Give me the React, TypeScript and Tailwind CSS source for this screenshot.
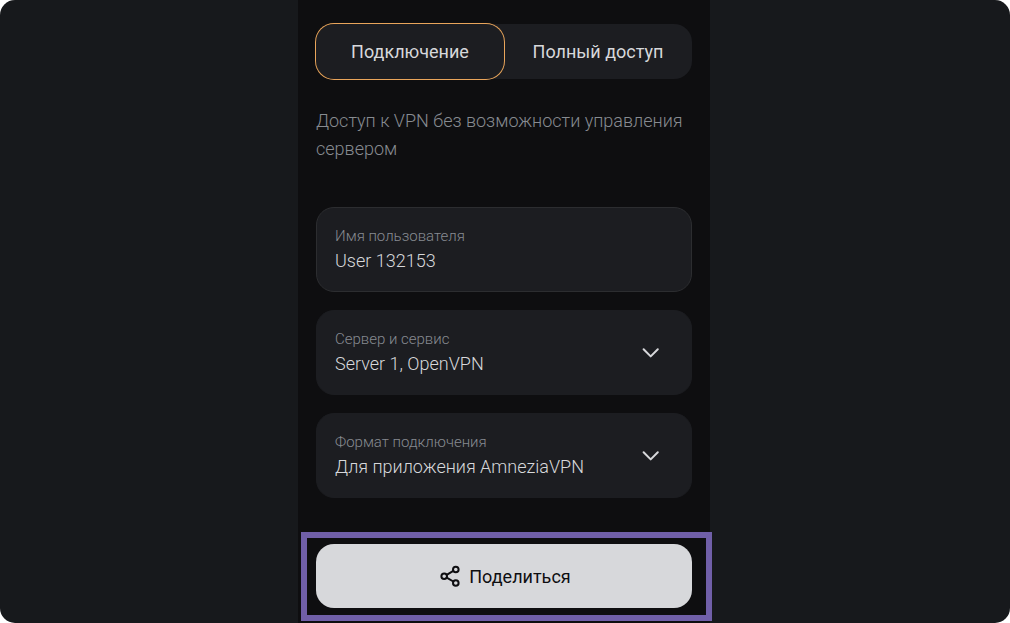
import React, { useState } from "react";

type FieldProps = { id: string; label: string; outlined?: boolean; children: React.ReactNode; chevron?: boolean };

const controlClass =
  "block h-[26px] w-full appearance-none bg-transparent p-0 text-[18px] leading-[26px] font-light text-[#d7d8db] outline-none";

function Chevron() {
  return (
    <svg className="pointer-events-none mr-2.5 h-6 w-6 shrink-0" viewBox="0 0 24 24" fill="none" stroke="#d7d8db" strokeWidth="2" strokeLinecap="round" strokeLinejoin="round" aria-hidden="true">
      <path d="M4.6 9.3l7.1 7.1 7.1-7.1" />
    </svg>
  );
}

function Field({ id, label, outlined, chevron, children }: FieldProps) {
  return (
    <div
      className={`flex items-center rounded-[18px] border bg-[#1c1d21] px-[18px] pt-4 pb-[17px] ${
        outlined ? "border-[#2c2d30]" : "border-[#1c1d21]"
      }`}
    >
      <div className="min-w-0 flex-1">
        <label htmlFor={id} className="block text-[15px] leading-6 font-light text-[#878b91]">
          {label}
        </label>
        {children}
      </div>
      {chevron && <Chevron />}
    </div>
  );
}

export default function App() {
  const [tab, setTab] = useState(0);
  const [name, setName] = useState("User 132153");
  const tabs = ["Подключение", "Полный доступ"];

  return (
    <div className="bg-white font-['Roboto',sans-serif]">
      <div className="flex min-h-screen justify-center overflow-hidden rounded-[15px] bg-[#17191c] pr-0.5">
        <main className="w-full max-w-[412px] bg-[#0e0e10] px-[18px] pt-6 pb-[15px]">
          <div className="grid h-[55px] grid-cols-2 rounded-[18px] bg-[#1c1d21]" role="tablist">
            {tabs.map((t, i) => (
              <button
                key={t}
                type="button"
                role="tab"
                aria-selected={tab === i}
                onClick={() => setTab(i)}
                className={`rounded-[18px] text-[18px] font-normal text-[#d7d8db] ${
                  tab === i ? "ring-1 ring-[#e9a55b]" : ""
                }`}
              >
                {t}
              </button>
            ))}
          </div>
          <p className="mt-7 text-[18px] leading-7 font-light text-[#878b91]">
            Доступ к VPN без возможности управления сервером
          </p>
          <form className="mt-11" onSubmit={(e) => e.preventDefault()}>
            <div className="grid gap-[18px]">
              <Field id="user" label="Имя пользователя" outlined>
                <input id="user" className={controlClass} value={name} onChange={(e) => setName(e.target.value)} />
              </Field>
              <Field id="server" label="Сервер и сервис" chevron>
                <select id="server" className={controlClass}>
                  <option>Server 1, OpenVPN</option>
                </select>
              </Field>
              <Field id="format" label="Формат подключения" chevron>
                <select id="format" className={controlClass}>
                  <option>Для приложения AmneziaVPN</option>
                </select>
              </Field>
            </div>
            <div className="relative mt-[46px]">
              <button type="submit" className="flex h-16 w-full items-center justify-center gap-2 rounded-[18px] bg-[#d7d8db] text-[18px] font-normal text-[#0e0e11]">
                <svg className="h-6 w-6" viewBox="0 0 24 24" fill="none" stroke="#0e0e11" strokeWidth="2" strokeLinecap="round" aria-hidden="true">
                  <circle cx="18.8" cy="5.5" r="2.8" />
                  <circle cx="7.2" cy="12.2" r="2.8" />
                  <circle cx="18.8" cy="19" r="2.8" />
                  <path d="M9.7 13.6l6.6 3.9M16.3 6.9l-6.6 3.9" />
                </svg>
                Поделиться
              </button>
              <div className="pointer-events-none absolute -top-3 -right-5 -bottom-[13px] -left-[15px] border-6 border-[#705fa8]" />
            </div>
          </form>
        </main>
      </div>
    </div>
  );
}
